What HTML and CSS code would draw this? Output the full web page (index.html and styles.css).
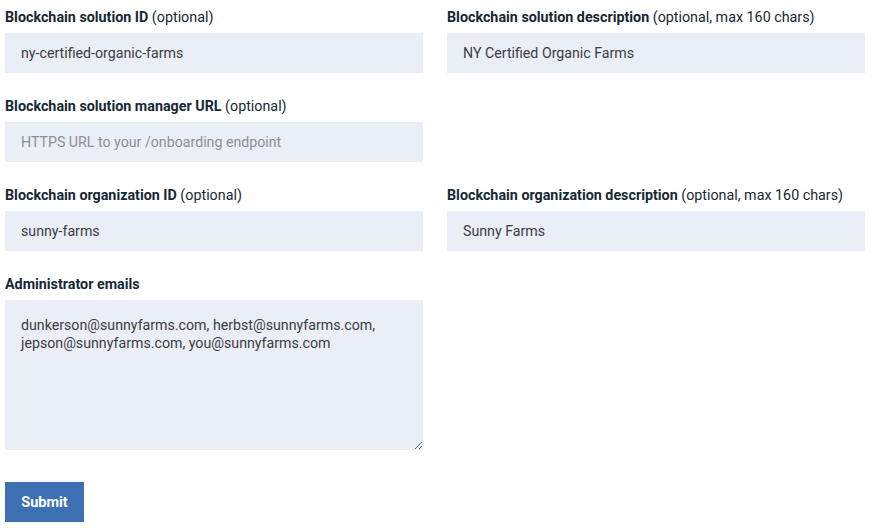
FILE: index.html
```html
<!DOCTYPE html>
<html lang="en">
<head>
<meta charset="utf-8">
<title>Blockchain form</title>
<link rel="stylesheet" href="styles.css">
</head>
<body>
<form class="form">
  <div class="grid">
    <div class="field">
      <label class="label" for="sid"><b>Blockchain solution ID</b> (optional)</label>
      <input class="input" id="sid" type="text" value="ny-certified-organic-farms">
    </div>
    <div class="field">
      <label class="label" for="sdesc"><b>Blockchain solution description</b> (optional, max 160 chars)</label>
      <input class="input" id="sdesc" type="text" value="NY Certified Organic Farms">
    </div>
    <div class="field">
      <label class="label" for="surl"><b>Blockchain solution manager URL</b> (optional)</label>
      <input class="input" id="surl" type="text" placeholder="HTTPS URL to your /onboarding endpoint">
    </div>
    <div class="field"></div>
    <div class="field">
      <label class="label" for="oid"><b>Blockchain organization ID</b> (optional)</label>
      <input class="input" id="oid" type="text" value="sunny-farms">
    </div>
    <div class="field">
      <label class="label" for="odesc"><b>Blockchain organization description</b> (optional, max 160 chars)</label>
      <input class="input" id="odesc" type="text" value="Sunny Farms">
    </div>
    <div class="field">
      <label class="label" for="emails"><b>Administrator emails</b></label>
      <textarea class="textarea" id="emails">dunkerson@sunnyfarms.com, herbst@sunnyfarms.com, jepson@sunnyfarms.com, you@sunnyfarms.com</textarea>
    </div>
  </div>
  <button class="button" type="button">Submit</button>
</form>
</body>
</html>
```
FILE: styles.css
```css
html, body {
  margin: 0;
  padding: 0;
  background: #ffffff;
}
body {
  font-family: Roboto, "Liberation Sans", sans-serif;
  color: #152935;
}
.form {
  padding: 7px 0 0 5px;
}
.grid {
  display: grid;
  grid-template-columns: 418px 418px;
  column-gap: 24px;
  row-gap: 23px;
}
.field {
  display: flex;
  flex-direction: column;
}
.label {
  font-size: 14.3px;
  line-height: 20px;
  margin-bottom: 6px;
  color: #152935;
}
.label b {
  font-weight: 700;
}
.input, .textarea {
  box-sizing: border-box;
  width: 418px;
  border: none;
  outline: none;
  background: #eaeef6;
  font-family: inherit;
  font-size: 14.2px;
  color: #3a3d42;
  margin: 0;
}
.input {
  height: 40px;
  padding: 0 16px;
}
.input::placeholder {
  color: #8c9096;
}
.textarea {
  height: 150px;
  padding: 16px;
  line-height: 18px;
  resize: both;
}
.button {
  margin-top: 32px;
  width: 79px;
  height: 40px;
  border: none;
  background: #3d6fb3;
  color: #ffffff;
  font-family: inherit;
  font-size: 14.5px;
  font-weight: 700;
  padding: 0;
}
```
